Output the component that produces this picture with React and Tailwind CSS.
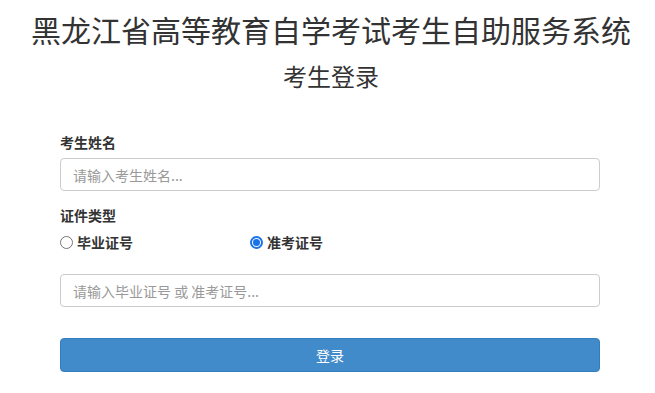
import React from "react";

export default function App() {
  const font = { fontFamily: '"Noto Sans CJK SC", "Noto Sans", sans-serif' };
  return (
    <div className="bg-white w-[655px] h-[393px] overflow-hidden text-[#333]" style={font}>
      <h1 className="text-[30px] leading-[30px] pt-[14px] text-center font-normal ml-[7px]">
        黑龙江省高等教育自学考试考生自助服务系统
      </h1>
      <h2 className="text-[24px] leading-[26px] mt-[19px] text-center font-normal ml-[7px]">
        考生登录
      </h2>
      <div className="pl-[60px] pr-[55px] mt-[43px]">
        <label className="block text-[14px] leading-[20px] font-bold">考生姓名</label>
        <input
          className="mt-[6px] block w-full h-[33px] border border-[#ccc] rounded-[4px] px-[12px] text-[14px] placeholder:text-[#999] outline-none"
          placeholder="请输入考生姓名..."
        />
        <label className="block mt-[14px] text-[14px] leading-[20px] font-bold">证件类型</label>
        <div className="flex items-center mt-[7px] h-[20px] text-[14px] font-bold">
          <label className="flex items-center w-[190px]">
            <span className="w-[13px] h-[13px] rounded-full border border-[#767676] bg-white"></span>
            <span className="ml-[4px]">毕业证号</span>
          </label>
          <label className="flex items-center">
            <span className="w-[13px] h-[13px] rounded-full border-2 border-[#1a73e8] flex items-center justify-center bg-white">
              <span className="w-[7px] h-[7px] rounded-full bg-[#1a73e8]"></span>
            </span>
            <span className="ml-[4px]">准考证号</span>
          </label>
        </div>
        <input
          className="mt-[22px] block w-full h-[33px] border border-[#ccc] rounded-[4px] px-[12px] text-[14px] placeholder:text-[#999] outline-none"
          placeholder="请输入毕业证号 或 准考证号..."
        />
        <button className="mt-[31px] block w-full h-[34px] rounded-[4px] bg-[#428bca] border border-[#357ebd] text-white text-[14px]">
          登录
        </button>
      </div>
    </div>
  );
}
